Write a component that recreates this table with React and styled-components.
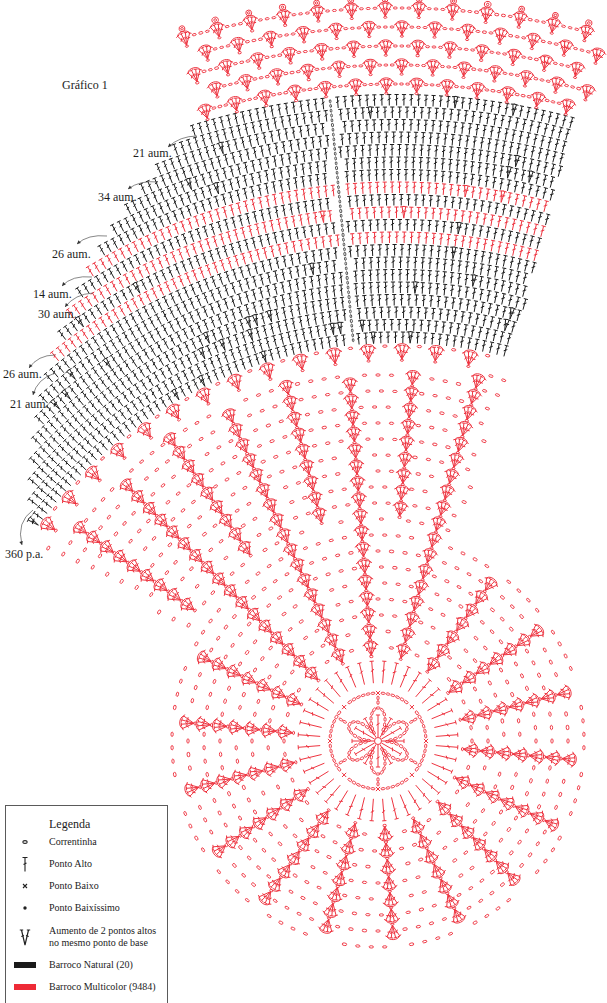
import React from "react";
import styled, { createGlobalStyle } from "styled-components";

const RED = "#ee3440";
const INK = "#1e1e1e";

// centres of the two stitch systems
const F = [396, 785]; // rows of the fan (black rows, top net)
const D = [378, 741]; // doily and its arms
const SEAM = -95.5;

const rad = (d) => (d * Math.PI) / 180;
const deg = (r) => (r * 180) / Math.PI;
const f = (n) => n.toFixed(1);
const at = (c, r, a) => [c[0] + r * Math.cos(rad(a)), c[1] + r * Math.sin(rad(a))];
const polar = (c, p) => {
  const dx = p[0] - c[0];
  const dy = p[1] - c[1];
  return [Math.hypot(dx, dy), deg(Math.atan2(dy, dx))];
};
const angDiff = (a, b) => Math.abs(((((a - b) % 360) + 540) % 360) - 180);

function buildChart() {
  const red = [];
  const ink = [];
  const redChain = [];
  const inkChain = [];
  let seed = 11;
  const rand = () => {
    seed = (seed * 16807) % 2147483647;
    return seed / 2147483647;
  };

  const dc = (out, x, y, a, len, bar = 2.1) => {
    const ux = Math.cos(rad(a));
    const uy = Math.sin(rad(a));
    const px = -uy;
    const py = ux;
    const tx = x + ux * len;
    const ty = y + uy * len;
    const mx = x + ux * len * 0.58;
    const my = y + uy * len * 0.58;
    out.push(
      `M${f(x)} ${f(y)}L${f(tx)} ${f(ty)}` +
        `M${f(tx + px * bar)} ${f(ty + py * bar)}L${f(tx - px * bar)} ${f(ty - py * bar)}` +
        `M${f(mx + px * 1.6 + ux)} ${f(my + py * 1.6 + uy)}L${f(mx - px * 1.6 - ux)} ${f(my - py * 1.6 - uy)}`
    );
  };
  const chain = (out, x, y, a, rx = 2.2, ry = 1.15) => {
    const ux = Math.cos(rad(a)) * rx;
    const uy = Math.sin(rad(a)) * rx;
    out.push(
      `M${f(x - ux)} ${f(y - uy)}A${rx} ${ry} ${f(a)} 1 0 ${f(x + ux)} ${f(y + uy)}A${rx} ${ry} ${f(a)} 1 0 ${f(x - ux)} ${f(y - uy)}Z`
    );
  };
  // a fan of four ponto alto worked into one base, closed by a chain arc
  const shell = (x, y, a, len = 12.5) => {
    const tips = [-30, -10, 10, 30].map((s) => {
      dc(red, x, y, a + s, len, 1.9);
      return at([x, y], len, a + s);
    });
    const c1 = at([x, y], len * 1.28, a - 17);
    const c2 = at([x, y], len * 1.28, a + 17);
    red.push(
      `M${f(tips[0][0])} ${f(tips[0][1])}C${f(c1[0])} ${f(c1[1])} ${f(c2[0])} ${f(c2[1])} ${f(tips[3][0])} ${f(tips[3][1])}`
    );
    const b = at([x, y], 1.2, a + 180);
    chain(redChain, b[0], b[1], a + 90, 1.6, 1);
  };
  const cross = (out, x, y, s = 2) =>
    out.push(`M${f(x - s)} ${f(y - s)}L${f(x + s)} ${f(y + s)}M${f(x + s)} ${f(y - s)}L${f(x - s)} ${f(y + s)}`);

  // black rows of ponto alto, three of them in red
  for (let i = 0; i < 20; i++) {
    const r = 442 + i * 12.5;
    const out = i === 8 || i === 10 || i === 12 ? red : ink;
    const start = -144 + (r - 442) * 0.155;
    const step = deg(7.3 / r);
    for (let a = start; a <= -75; a += step) {
      if (Math.abs(a - SEAM) < step * 0.7) continue;
      const [x, y] = at(F, r, a);
      if (rand() < 0.035) {
        dc(out, x, y, a - 9, 11.5);
        dc(out, x, y, a + 9, 11.5);
      } else dc(out, x, y, a, 11);
    }
  }
  for (let r = 447; r < 690; r += 4.8) {
    const [x, y] = at(F, r, SEAM);
    chain(inkChain, x, y, SEAM, 1.6, 0.85);
  }

  // top net
  for (let j = 0; j < 5; j++) {
    const r = 693 + j * 19;
    const off = j % 2 ? 1.25 : 0;
    const angs = [];
    for (let a = -105.8 + off; a <= -74.5; a += 2.5) angs.push(a);
    angs.forEach((a, k) => {
      const [x, y] = at(F, r, a);
      shell(x, y, a, 12.5);
      if (j === 4) {
        const [px, py] = at(F, r + 17, a);
        chain(red, px, py, a, 2.9, 2.9);
        chain(red, px, py, a, 1.2, 1.2);
      }
      if (k < angs.length - 1) {
        [0.3, 0.5, 0.7].forEach((t) => {
          const b = a + 2.5 * t;
          const [cx, cy] = at(F, r + 8, b);
          chain(redChain, cx, cy, b + 90, 2, 1.05);
        });
      }
    });
  }

  // red shells hanging under the black rows
  for (let a = -143.2; a <= -76; a += 4.5) {
    const [x, y] = at(F, 426, a);
    shell(x, y, a, 13.5);
    const q = at(F, 439, a + 2.25);
    chain(redChain, q[0], q[1], a + 2.25 + 90);
  }

  const inLace = (p) => {
    const [rD, aD] = polar(D, p);
    if (rD <= 212) return true;
    const [rF] = polar(F, p);
    return aD >= -150 && aD <= -70 && rF < 421;
  };
  const MAIN = Array.from({ length: 18 }, (_, k) => -94.5 + 20 * k);
  const MID = [-144.5, -124.5, -104.5, -84.5];

  // chain rows between the arms
  for (let r = 94, m = 0; r < 470; r += 16, m++) {
    const n = Math.round((2 * Math.PI * r) / 13.5);
    for (let k = 0; k < n; k++) {
      const a = (k * 360) / n - 180 + (m % 2) * (180 / n);
      const p = at(D, r, a);
      if (!inLace(p)) continue;
      const arms = r >= 218 ? MAIN.concat(MID) : MAIN;
      if (arms.some((g) => rad(angDiff(a, g)) * r < 9)) continue;
      chain(redChain, p[0], p[1], a + 90);
    }
  }

  // arms of shells
  const arm = (a, r0) => {
    for (let r = r0; ; r += 16.5) {
      if (!inLace(at(D, r + 11, a))) break;
      const p = at(D, r, a);
      shell(p[0], p[1], a);
    }
  };
  MAIN.forEach((a) => arm(a, 86));
  MID.forEach((a) => arm(a, 226));

  // centre of the doily
  red.push(`M${f(D[0] - 3.5)} ${f(D[1])}a3.5 3.5 0 1 0 7 0a3.5 3.5 0 1 0 -7 0`);
  for (let k = 0; k < 12; k++) {
    const p = at(D, 4, k * 30);
    dc(red, p[0], p[1], k * 30, 22);
  }
  let acc = 0;
  let prev = null;
  for (let t = 0; t <= 360; t += 0.8) {
    const s = Math.abs(Math.sin(rad(3 * t)));
    const rr = 33 * Math.pow(s, 0.7);
    const p = at(D, rr, t);
    if (prev) acc += Math.hypot(p[0] - prev[0], p[1] - prev[1]);
    if (prev && acc >= 4.4 && rr > 8) {
      acc = 0;
      chain(redChain, p[0], p[1], deg(Math.atan2(p[1] - prev[1], p[0] - prev[0])), 2, 1.1);
    }
    prev = p;
  }
  for (let k = 0; k < 6; k++) {
    [38.5, 43].forEach((r) => {
      const p = at(D, r, 30 + k * 60);
      chain(redChain, p[0], p[1], 30 + k * 60, 2, 1.1);
    });
  }
  const ringN = Math.round((2 * Math.PI * 48) / 5);
  for (let k = 0; k < ringN; k++) {
    const a = (k * 360) / ringN;
    if ([0, 45, 90, 135, 180, 225, 270, 315].some((x) => angDiff(a, x) < 4)) continue;
    const p = at(D, 48, a);
    chain(redChain, p[0], p[1], a + 90, 2, 1.1);
  }
  for (let k = 0; k < 8; k++) {
    const p = at(D, 48, k * 45);
    cross(red, p[0], p[1], 2.1);
  }
  for (let k = 0; k < 40; k++) {
    const a = k * 9 + 4.5;
    const p = at(D, 58, a);
    dc(red, p[0], p[1], a, 22);
  }

  return {
    red: red.join(""),
    ink: ink.join(""),
    redChain: redChain.join(""),
    inkChain: inkChain.join(""),
  };
}

const CHART = buildChart();

const NOTES = [
  { text: "21 aum.", x: 133, y: 157, from: [197, 136], c: [180, 136], to: [168, 147] },
  { text: "34 aum.", x: 98, y: 201, from: [158, 182], c: [140, 180], to: [128, 189] },
  { text: "26 aum.", x: 52, y: 258, from: [107, 236], c: [88, 234], to: [77, 244] },
  { text: "14 aum.", x: 33, y: 298, from: [92, 277], c: [72, 275], to: [62, 286] },
  { text: "30 aum.", x: 38, y: 318, from: [93, 293], c: [75, 294], to: [65, 307] },
  { text: "26 aum.", x: 3, y: 378, from: [55, 355], c: [38, 355], to: [29, 368] },
  { text: "21 aum.", x: 10, y: 408, from: [55, 373], c: [37, 379], to: [33, 395] },
  { text: "360 p.a.", x: 5, y: 558, from: [33, 510], c: [16, 522], to: [22, 545] },
];

const arrowHead = ({ c, to }) => {
  const a = Math.atan2(to[1] - c[1], to[0] - c[0]);
  const l = 3.6;
  const w = 1.8;
  const bx = to[0] - Math.cos(a) * l;
  const by = to[1] - Math.sin(a) * l;
  return `M${f(to[0])} ${f(to[1])}L${f(bx - Math.sin(a) * w)} ${f(by + Math.cos(a) * w)}L${f(bx + Math.sin(a) * w)} ${f(by - Math.cos(a) * w)}Z`;
};

const GlobalStyle = createGlobalStyle`
  html, body {
    margin: 0;
    padding: 0;
    background: #fff;
  }
  body {
    font-family: "Liberation Serif", "Times New Roman", serif;
  }
`;

const Page = styled.div`
  position: relative;
  width: 607px;
  height: 1003px;
  overflow: hidden;
  background: #fff;
`;

const Canvas = styled.svg`
  position: absolute;
  left: 0;
  top: 0;
  width: 607px;
  height: 1003px;
`;

const Note = styled.text`
  font-family: "Liberation Serif", "Times New Roman", serif;
  font-size: ${(p) => p.$size || 12}px;
  fill: #1c1c1c;
`;

const Legend = styled.div`
  position: absolute;
  left: 5px;
  top: 805px;
  width: 163px;
  height: 210px;
  box-sizing: border-box;
  border: 1px solid #5a5a5a;
  background: #fff;
  padding-top: 11px;
  font-family: "Liberation Serif", "Times New Roman", serif;
  color: #1c1c1c;
`;

const LegendTitle = styled.div`
  padding-left: 43px;
  font-size: 12px;
  line-height: 14px;
`;

const LegendRow = styled.div`
  display: grid;
  grid-template-columns: 38px 1fr;
  column-gap: 5px;
  align-items: center;
  height: ${(p) => p.$h || 22}px;
  font-size: 10px;
  line-height: 12px;
`;

const IconCell = styled.div`
  display: flex;
  justify-content: center;
  align-items: center;
`;

const Swatch = styled.div`
  width: 22px;
  height: 6px;
  background: ${(p) => p.$color};
`;

const ChainIcon = () => (
  <svg width="8" height="6" viewBox="0 0 8 6">
    <ellipse cx="4" cy="3" rx="2.2" ry="1.4" fill="none" stroke="#222" strokeWidth="1.1" />
  </svg>
);

const TrebleIcon = () => (
  <svg width="8" height="16" viewBox="0 0 8 16">
    <path d="M4 1.5V15.5M1.5 1.5H6.5M2.5 8.5L5.5 7" stroke="#222" strokeWidth="1.1" fill="none" />
  </svg>
);

const CrossIcon = () => (
  <svg width="6" height="6" viewBox="0 0 6 6">
    <path d="M1 1L5 5M5 1L1 5" stroke="#222" strokeWidth="1.1" />
  </svg>
);

const DotIcon = () => (
  <svg width="6" height="6" viewBox="0 0 6 6">
    <circle cx="3" cy="3" r="1.7" fill="#222" />
  </svg>
);

const IncreaseIcon = () => (
  <svg width="12" height="18" viewBox="0 0 12 18">
    <path
      d="M6 17L2.5 2M6 17L9.5 2M0.8 2H4.2M7.8 2H11.2M2.3 8.5L5 7.5M7 7.5L9.7 8.5"
      stroke="#222"
      strokeWidth="1.2"
      fill="none"
    />
  </svg>
);

const LEGEND = [
  { icon: <ChainIcon />, label: "Correntinha", h: 22 },
  { icon: <TrebleIcon />, label: "Ponto Alto", h: 22 },
  { icon: <CrossIcon />, label: "Ponto Baixo", h: 22 },
  { icon: <DotIcon />, label: "Ponto Baixíssimo", h: 22 },
  {
    icon: <IncreaseIcon />,
    label: (
      <>
        Aumento de 2 pontos altos
        <br />
        no mesmo ponto de base
      </>
    ),
    h: 36,
  },
  { icon: <Swatch $color="#1a1a1a" />, label: "Barroco Natural (20)", h: 20 },
  { icon: <Swatch $color="#ee2a36" />, label: "Barroco Multicolor (9484)", h: 24 },
];

export default function App() {
  return (
    <Page>
      <GlobalStyle />
      <Canvas viewBox="0 0 607 1003">
        <path d={CHART.ink} stroke={INK} strokeWidth="1" fill="none" />
        <path d={CHART.inkChain} stroke={INK} strokeWidth="0.75" fill="none" />
        <path d={CHART.red} stroke={RED} strokeWidth="1" fill="none" />
        <path d={CHART.redChain} stroke={RED} strokeWidth="0.95" fill="none" />

        <Note x="62" y="89" $size={12}>
          Gráfico 1
        </Note>
        {NOTES.map((n, i) => (
          <g key={i}>
            <path
              d={`M${n.from[0]} ${n.from[1]}Q${n.c[0]} ${n.c[1]} ${n.to[0]} ${n.to[1]}`}
              stroke="#555"
              strokeWidth="0.7"
              fill="none"
            />
            <path d={arrowHead(n)} fill="#333" />
            <Note x={n.x} y={n.y}>
              {n.text}
            </Note>
          </g>
        ))}
      </Canvas>

      <Legend>
        <LegendTitle>Legenda</LegendTitle>
        {LEGEND.map((row, i) => (
          <LegendRow key={i} $h={row.h}>
            <IconCell>{row.icon}</IconCell>
            <span>{row.label}</span>
          </LegendRow>
        ))}
      </Legend>
    </Page>
  );
}
